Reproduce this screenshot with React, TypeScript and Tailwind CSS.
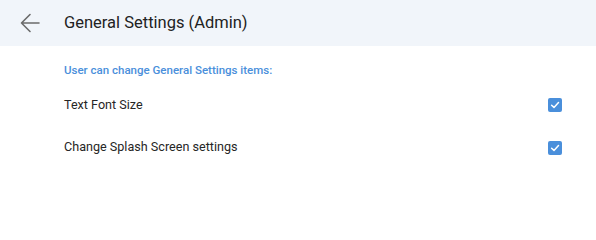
import React from "react";

function Check() {
  return (
    <div className="w-[14px] h-[14px] rounded-[2px] bg-[#4a8fdb] flex items-center justify-center">
      <svg width="10" height="10" viewBox="0 0 10 10" fill="none">
        <path d="M1.6 5.2 L4 7.4 L8.5 2.6" stroke="white" strokeWidth="1.5" strokeLinecap="round" strokeLinejoin="round" />
      </svg>
    </div>
  );
}

export default function App() {
  return (
    <div className="w-[596px] h-[227px] bg-white" style={{ fontFamily: "Roboto, 'Liberation Sans', sans-serif" }}>
      <div className="h-[46px] bg-[#f1f5fa] flex items-center">
        <div className="w-[64px] flex items-center pl-[20px]">
          <svg width="20" height="20" viewBox="0 0 20 20" fill="none">
            <path d="M19 10 H1.5 M10 1.5 L1.5 10 L10 18.5" stroke="#6b6b6b" strokeWidth="1.6" strokeLinecap="round" strokeLinejoin="round" />
          </svg>
        </div>
        <div className="text-[16.5px] font-normal text-[#222] leading-none">General Settings (Admin)</div>
      </div>
      <div className="pl-[64px] pr-[34px]">
        <div className="pt-[17px] mb-[6px] leading-[14px] text-[11.5px] font-medium text-[#4a8fdb]">
          User can change General Settings items:
        </div>
        <div className="h-[43px] flex items-center justify-between text-[12.6px] text-[#262626]">
          <span className="pt-[1px]">Text Font Size</span>
          <Check />
        </div>
        <div className="h-[43px] flex items-center justify-between text-[12.6px] text-[#262626]">
          <span>Change Splash Screen settings</span>
          <Check />
        </div>
      </div>
    </div>
  );
}
